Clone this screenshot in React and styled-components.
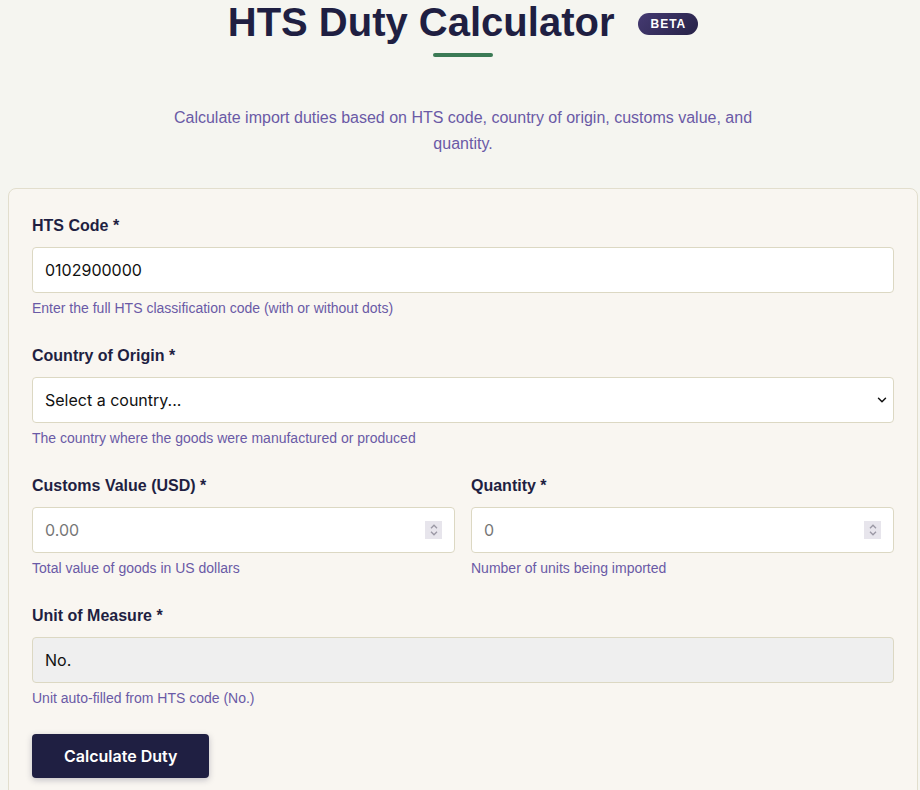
import React from "react";
import styled, { createGlobalStyle } from "styled-components";
import { ChevronDown } from "lucide-react";

const GlobalStyle = createGlobalStyle`
  html, body {
    margin: 0;
    background: #f5f5f0;
  }
  body {
    font-family: Inter, "Noto Sans", sans-serif;
  }
  * { box-sizing: border-box; }
`;

const Page = styled.div`
  width: 910px;
  margin-left: 8px;
`;

const Header = styled.header`
  display: flex;
  flex-direction: column;
  align-items: center;
  margin-bottom: 31px;
`;

const TitleRow = styled.div`
  display: flex;
  align-items: center;
  gap: 24px;
`;

const Title = styled.h1`
  margin: 0;
  font-family: "Liberation Sans", Arial, sans-serif;
  font-size: 40px;
  font-weight: 700;
  line-height: 44px;
  color: #1f1f42;
`;

const Badge = styled.span`
  display: inline-flex;
  align-items: center;
  height: 22px;
  padding: 0 12px;
  border-radius: 11px;
  background: linear-gradient(135deg, #453a72, #262247);
  color: #fff;
  font-family: "Liberation Sans", Arial, sans-serif;
  font-size: 12px;
  font-weight: 700;
  letter-spacing: 1px;
  margin-top: 4px;
`;

const Underline = styled.div`
  width: 60px;
  height: 4px;
  border-radius: 2px;
  background: #3b7a55;
  margin-top: 9px;
`;

const Subtitle = styled.p`
  margin: 48px 0 0;
  max-width: 600px;
  text-align: center;
  font-family: "Liberation Sans", Arial, sans-serif;
  font-size: 16px;
  line-height: 26px;
  color: #6a5aa6;
`;

const Card = styled.form`
  background: #f9f6f1;
  border: 1px solid #e2decd;
  border-radius: 8px;
  padding: 25px 23px 24px;
`;

const Field = styled.div`
  margin-bottom: 26px;
`;

const Row = styled.div`
  display: grid;
  grid-template-columns: 1fr 1fr;
  gap: 16px;
`;

const Label = styled.label`
  display: block;
  font-family: "Liberation Sans", Arial, sans-serif;
  font-size: 16px;
  line-height: 24px;
  font-weight: 700;
  color: #1f1f42;
  margin-bottom: 9px;
`;

const inputBase = `
  display: block;
  width: 100%;
  height: 46px;
  padding: 0 12px;
  border: 1px solid #dcd8c3;
  border-radius: 4px;
  font-family: Inter, "Noto Sans", sans-serif;
  font-size: 16px;
  color: #111;
  outline: none;
  &::placeholder { color: #777; }
`;

const Input = styled.input`
  ${inputBase}
  background: ${(p) => (p.readOnly ? "#efefef" : "#fff")};
  -moz-appearance: textfield;
  &::-webkit-inner-spin-button,
  &::-webkit-outer-spin-button {
    -webkit-appearance: none;
    margin: 0;
  }
`;

const Control = styled.div`
  position: relative;
`;

const Spinner = styled.span`
  position: absolute;
  right: 13px;
  top: 50%;
  transform: translateY(-50%);
  width: 17px;
  height: 18px;
  background: #e7e5ec;
  display: flex;
  flex-direction: column;
  align-items: center;
  justify-content: center;
  gap: 2px;
  pointer-events: none;
`;

const Caret = styled(ChevronDown)`
  position: absolute;
  right: 5px;
  top: 50%;
  transform: translateY(-50%);
  color: #111;
  pointer-events: none;
`;

const Select = styled.select`
  ${inputBase}
  appearance: none;
  background: #fff;
`;

const Hint = styled.small`
  display: block;
  margin-top: 5px;
  font-family: "Liberation Sans", Arial, sans-serif;
  font-size: 14px;
  line-height: 20px;
  color: #6a5aa6;
`;

const Button = styled.button`
  height: 44px;
  padding: 0 32px;
  border: none;
  border-radius: 4px;
  background: #1f1f42;
  color: #fff;
  font-family: Inter, "Noto Sans", sans-serif;
  font-size: 16px;
  font-weight: 600;
  box-shadow: 0 2px 6px rgba(31, 31, 66, 0.25);
  cursor: pointer;
`;

function SpinIcon() {
  return (
    <Spinner>
      <svg width="8" height="5" viewBox="0 0 8 5" fill="none">
        <path d="M1 4.2 L4 1.2 L7 4.2" stroke="#9a98a4" strokeWidth="1.3" />
      </svg>
      <svg width="8" height="5" viewBox="0 0 8 5" fill="none">
        <path d="M1 0.8 L4 3.8 L7 0.8" stroke="#9a98a4" strokeWidth="1.3" />
      </svg>
    </Spinner>
  );
}

export default function App() {
  return (
    <>
      <GlobalStyle />
      <Page>
        <Header>
          <TitleRow>
            <Title>HTS Duty Calculator</Title>
            <Badge>BETA</Badge>
          </TitleRow>
          <Underline />
          <Subtitle>
            Calculate import duties based on HTS code, country of origin, customs value, and quantity.
          </Subtitle>
        </Header>

        <Card onSubmit={(e) => e.preventDefault()}>
          <Field>
            <Label htmlFor="hts">HTS Code *</Label>
            <Input id="hts" type="text" defaultValue="0102900000" />
            <Hint>Enter the full HTS classification code (with or without dots)</Hint>
          </Field>

          <Field>
            <Label htmlFor="country">Country of Origin *</Label>
            <Control>
              <Select id="country" defaultValue="">
                <option value="">Select a country...</option>
              </Select>
              <Caret size={14} strokeWidth={2.5} />
            </Control>
            <Hint>The country where the goods were manufactured or produced</Hint>
          </Field>

          <Row>
            <Field>
              <Label htmlFor="value">Customs Value (USD) *</Label>
              <Control>
                <Input id="value" type="number" placeholder="0.00" />
                <SpinIcon />
              </Control>
              <Hint>Total value of goods in US dollars</Hint>
            </Field>
            <Field>
              <Label htmlFor="qty">Quantity *</Label>
              <Control>
                <Input id="qty" type="number" placeholder="0" />
                <SpinIcon />
              </Control>
              <Hint>Number of units being imported</Hint>
            </Field>
          </Row>

          <Field>
            <Label htmlFor="unit">Unit of Measure *</Label>
            <Input id="unit" type="text" value="No." readOnly />
            <Hint>Unit auto-filled from HTS code (No.)</Hint>
          </Field>

          <Button type="submit">Calculate Duty</Button>
        </Card>
      </Page>
    </>
  );
}
